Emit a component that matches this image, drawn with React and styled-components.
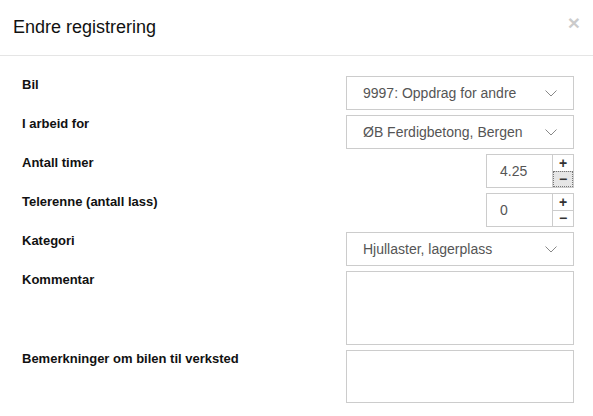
import React from 'react';
import styled, { createGlobalStyle } from 'styled-components';

const GlobalStyle = createGlobalStyle`
  html, body {
    margin: 0;
    padding: 0;
    background: #fff;
  }
  body {
    font-family: "Liberation Sans", Arial, sans-serif;
    color: #333;
  }
`;

const Modal = styled.div`
  width: 593px;
  height: 416px;
  background: #fff;
  overflow: hidden;
`;

const Header = styled.div`
  display: flex;
  align-items: flex-start;
  justify-content: space-between;
  padding: 15px 13px 15px 13px;
  border-bottom: 1px solid #e5e5e5;
`;

const Title = styled.h4`
  margin: 0;
  font-size: 18px;
  font-weight: 400;
  line-height: 25px;
  color: #111;
`;

const CloseButton = styled.button`
  background: none;
  border: none;
  padding: 0;
  margin-top: -3px;
  font-family: "Liberation Sans", Arial, sans-serif;
  font-size: 21px;
  font-weight: 700;
  line-height: 1;
  color: #000;
  opacity: 0.2;
  cursor: pointer;
`;

const Body = styled.div`
  padding: 20px 19px 0 22px;
  display: flex;
  flex-direction: column;
  gap: 5px;
`;

const Row = styled.div`
  display: flex;
  justify-content: space-between;
  align-items: flex-start;
`;

const Label = styled.label`
  font-size: 13px;
  font-weight: 700;
  line-height: 18px;
  color: #111;
`;

const SelectBox = styled.div`
  width: 228px;
  height: 34px;
  box-sizing: border-box;
  border: 1px solid #ccc;
  padding: 0 16px;
  display: flex;
  align-items: center;
  justify-content: space-between;
  font-size: 14px;
  color: #555;
`;

const Chevron = () => (
  <svg width="12" height="7" viewBox="0 0 12 7" fill="none">
    <path d="M0.5 0.5 L6 6 L11.5 0.5" stroke="#888" strokeWidth="1" />
  </svg>
);

const Spinner = styled.div`
  width: 88px;
  height: 34px;
  box-sizing: border-box;
  border: 1px solid #ccc;
  display: flex;
`;

const NumberValue = styled.div`
  flex: 1;
  display: flex;
  align-items: center;
  padding-left: 13px;
  font-size: 14px;
  color: #555;
`;

const SpinButtons = styled.div`
  width: 20px;
  border-left: 1px solid #ccc;
  display: flex;
  flex-direction: column;
`;

const SpinButton = styled.div`
  flex: 1;
  display: flex;
  align-items: center;
  justify-content: center;
  box-sizing: border-box;
  font-size: 14px;
  font-weight: 700;
  line-height: 1;
  color: #333;
  border-top: ${(p) => (p.$lower ? '1px solid #ccc' : 'none')};
  background: ${(p) => (p.$active ? '#e6e6e6' : '#fff')};
  outline: ${(p) => (p.$active ? '1px dotted #777' : 'none')};
  outline-offset: -1px;
`;

const TextArea = styled.div`
  width: 228px;
  height: ${(p) => p.$height}px;
  box-sizing: border-box;
  border: 1px solid #ccc;
  background: #fff;
`;

const Select = ({ value }) => (
  <SelectBox>
    <span>{value}</span>
    <Chevron />
  </SelectBox>
);

const NumberInput = ({ value, active }) => (
  <Spinner>
    <NumberValue>{value}</NumberValue>
    <SpinButtons>
      <SpinButton>+</SpinButton>
      <SpinButton $lower $active={active}>−</SpinButton>
    </SpinButtons>
  </Spinner>
);

export default function App() {
  return (
    <Modal>
      <GlobalStyle />
      <Header>
        <Title>Endre registrering</Title>
        <CloseButton aria-label="Lukk">×</CloseButton>
      </Header>
      <Body>
        <Row>
          <Label>Bil</Label>
          <Select value="9997: Oppdrag for andre" />
        </Row>
        <Row>
          <Label>I arbeid for</Label>
          <Select value="ØB Ferdigbetong, Bergen" />
        </Row>
        <Row>
          <Label>Antall timer</Label>
          <NumberInput value="4.25" active />
        </Row>
        <Row>
          <Label>Telerenne (antall lass)</Label>
          <NumberInput value="0" />
        </Row>
        <Row>
          <Label>Kategori</Label>
          <Select value="Hjullaster, lagerplass" />
        </Row>
        <Row>
          <Label>Kommentar</Label>
          <TextArea $height={74} />
        </Row>
        <Row>
          <Label>Bemerkninger om bilen til verksted</Label>
          <TextArea $height={53} />
        </Row>
      </Body>
    </Modal>
  );
}
